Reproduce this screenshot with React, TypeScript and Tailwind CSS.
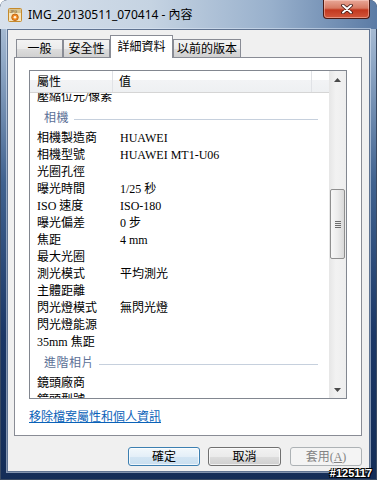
import React from 'react';

type Row = { k: string; v?: string };

const before: Row[] = [{ k: '壓縮位元/像素' }];

const camera: Row[] = [
  { k: '相機製造商', v: 'HUAWEI' },
  { k: '相機型號', v: 'HUAWEI MT1-U06' },
  { k: '光圈孔徑' },
  { k: '曝光時間', v: '1/25 秒' },
  { k: 'ISO 速度', v: 'ISO-180' },
  { k: '曝光偏差', v: '0 步' },
  { k: '焦距', v: '4 mm' },
  { k: '最大光圈' },
  { k: '測光模式', v: '平均測光' },
  { k: '主體距離' },
  { k: '閃光燈模式', v: '無閃光燈' },
  { k: '閃光燈能源' },
  { k: '35mm 焦距' },
];

const advanced: Row[] = [{ k: '鏡頭廠商' }, { k: '鏡頭型號' }];

const ming = "font-['Liberation_Serif','Noto_Sans_CJK_TC',serif]";
const cjk = "font-['Noto_Sans_CJK_TC',sans-serif]";

const PropRow = ({ row }: { row: Row }) => (
  <div className="h-[17px] flex items-center text-[12px] leading-[17px] text-black whitespace-nowrap">
    <div className="w-[90px] pl-[7px]">{row.k}</div>
    <div>{row.v}</div>
  </div>
);

const Group = ({ label }: { label: string }) => (
  <div className="h-[24px] flex items-center pl-[14px] text-[12px] text-[#5b7096]">
    <span className="tracking-[0.5px]">{label}</span>
    <div className="flex-1 h-px bg-[#c6d0dd] ml-[5px] mr-[11px] mt-[2px]" />
  </div>
);

const Tab = ({ label, w, active }: { label: string; w: string; active?: boolean }) => (
  <div
    className={`${w} flex items-center justify-center text-[12px] border border-[#898c95] border-b-0 ${
      active
        ? 'h-[23px] bg-white relative z-10'
        : 'h-[19px] bg-[linear-gradient(180deg,#f3f3f3_0%,#ebebeb_50%,#dddddd_51%,#cfcfcf_100%)]'
    }`}
  >
    {label}
  </div>
);

export default function App() {
  return (
    <div
      className={`w-[377px] h-[480px] relative flex flex-col overflow-hidden rounded-t-[7px] shadow-[inset_0_0_0_1px_#3a4a62] bg-[linear-gradient(180deg,#b9c9dc_0%,#93abc8_12%,#40628f_38%,#1b3766_70%,#142d57_100%)] ${cjk}`}
    >
      {/* title bar */}
      <div className="h-[29px] shrink-0 flex items-center pl-[7px] pr-[7px] rounded-t-[7px] bg-[linear-gradient(90deg,#d8e1ec_0%,#c5d3e2_40%,#98b0cc_72%,#5b7ba5_100%)]">
        <svg width="16" height="16" viewBox="0 0 16 16" className="shrink-0">
          <rect x="1.5" y="1.5" width="13" height="13" rx="1" fill="#f7e6bd" stroke="#c58a2c" />
          <rect x="2" y="2" width="12" height="4" fill="#d8c28f" />
          <text x="3" y="5.6" fontSize="3.6" fill="#6b4b12" fontFamily="Liberation Sans">JPG</text>
          <circle cx="8" cy="10.3" r="3.3" fill="#f28b22" stroke="#b45a0e" strokeWidth="0.8" />
          <circle cx="8" cy="10.3" r="1.3" fill="#fff3dc" />
        </svg>
        <span className="ml-[5px] text-[12px] text-black font-['Noto_Sans','Noto_Sans_CJK_TC',sans-serif] leading-none">
          IMG_20130511_070414 - 內容
        </span>
        <div className="flex-1" />
        <div className="self-start w-[47px] h-[19px] rounded-b-[4px] border border-t-0 border-[#4a1a14] bg-[linear-gradient(180deg,#e8a898_0%,#d77a63_45%,#c2381f_55%,#d2573c_100%)] flex items-center justify-center shadow-[inset_0_0_0_1px_rgba(255,220,210,0.45)]">
          <svg width="12" height="10" viewBox="0 0 12 10">
            <path d="M2 1.5 L10 8.5 M10 1.5 L2 8.5" stroke="#3a1410" strokeWidth="3.6" strokeLinecap="round" />
            <path d="M2 1.5 L10 8.5 M10 1.5 L2 8.5" stroke="#ffffff" strokeWidth="2" strokeLinecap="round" />
          </svg>
        </div>
      </div>

      {/* client area */}
      <div className="mx-[7px] h-[443px] shrink-0 bg-[#f0f0f0] border border-[#5f7391] shadow-[0_0_0_1px_rgba(220,232,245,0.55)] flex flex-col">
        <div className={`flex items-end h-[23px] mt-[5px] ml-[8px] ${ming}`}>
          <Tab label="一般" w="w-[47px]" />
          <Tab label="安全性" w="w-[47px]" />
          <Tab label="詳細資料" w="w-[63px]" active />
          <Tab label="以前的版本" w="w-[68px]" />
        </div>

        <div className={`ml-[6px] -mt-px w-[348px] h-[379px] bg-white border border-[#898c95] flex flex-col pl-[14px] pt-[12px] ${ming}`}>
          {/* list view */}
          <div className="w-[318px] h-[329px] border border-[#828790] flex">
            <div className="flex-1 flex flex-col overflow-hidden">
              <div className="h-[22px] shrink-0 flex text-[12px] border-b border-[#d5d5d5] bg-[linear-gradient(180deg,#ffffff_0%,#ffffff_42%,#f2f3f5_43%,#eef0f2_100%)]">
                <div className="w-[83px] pl-[7px] flex items-center border-r border-[#e0e2e6]">屬性</div>
                <div className="w-[199px] pl-[6px] flex items-center border-r border-[#e0e2e6]">值</div>
                <div className="flex-1" />
              </div>
              <div className="flex-1 overflow-hidden">
                <div className="-mt-[4px]">
                  {before.map((r) => (
                    <PropRow key={r.k} row={r} />
                  ))}
                  <Group label="相機" />
                  {camera.map((r) => (
                    <PropRow key={r.k} row={r} />
                  ))}
                  <Group label="進階相片" />
                  {advanced.map((r) => (
                    <PropRow key={r.k} row={r} />
                  ))}
                </div>
              </div>
            </div>

            {/* scrollbar */}
            <div className="w-[17px] shrink-0 flex flex-col bg-[linear-gradient(90deg,#e6e6e6_0%,#f2f2f2_40%,#eeeeee_100%)]">
              <div className="h-[17px] flex items-center justify-center">
                <svg width="7" height="4" viewBox="0 0 7 4">
                  <path d="M0 4 L3.5 0 L7 4 Z" fill="#4a4a4a" />
                </svg>
              </div>
              <div className="h-[101px]" />
              <div className="h-[70px] mx-[1px] rounded-[2px] border border-[#8f8f8f] bg-[linear-gradient(90deg,#f7f7f7_0%,#ececec_50%,#d9d9d9_100%)] flex flex-col items-center justify-center gap-[1px]">
                <div className="w-[6px] h-px bg-[#6d6d6d]" />
                <div className="w-[6px] h-px bg-[#6d6d6d]" />
                <div className="w-[6px] h-px bg-[#6d6d6d]" />
                <div className="w-[6px] h-px bg-[#6d6d6d]" />
              </div>
              <div className="flex-1" />
              <div className="h-[17px] flex items-center justify-center">
                <svg width="7" height="4" viewBox="0 0 7 4">
                  <path d="M0 0 L7 0 L3.5 4 Z" fill="#4a4a4a" />
                </svg>
              </div>
            </div>
          </div>

          <div className={`mt-[9px] w-fit text-[12px] leading-[15px] text-[#0a62b8] underline ${cjk}`}>
            移除檔案屬性和個人資訊
          </div>
        </div>

        {/* buttons */}
        <div className={`flex mt-[11px] pl-[120px] text-[12px] ${ming}`}>
          <div className="w-[72px] h-[19px] rounded-[3px] border border-[#3c7fb1] bg-[linear-gradient(180deg,#f2f8fc_0%,#e4eff8_50%,#d3e5f3_51%,#c9dff0_100%)] shadow-[inset_0_0_0_1px_rgba(255,255,255,0.7)] flex items-center justify-center">
            確定
          </div>
          <div className="ml-[8px] w-[73px] h-[19px] rounded-[3px] border border-[#707070] bg-[linear-gradient(180deg,#f2f2f2_0%,#ebebeb_50%,#dddddd_51%,#cfcfcf_100%)] shadow-[inset_0_0_0_1px_rgba(255,255,255,0.7)] flex items-center justify-center">
            取消
          </div>
          <div className="ml-[9px] w-[72px] h-[19px] rounded-[3px] border border-[#adb2b5] bg-[#f4f4f4] text-[#838383] flex items-center justify-center">
            套用(<span className="underline">A</span>)
          </div>
        </div>
      </div>

      <div className="absolute right-[5px] bottom-[1px] text-[11px] leading-[11px] font-bold text-white font-['Liberation_Sans',sans-serif] [text-shadow:1px_1px_0_#000,-1px_-1px_0_#000,1px_-1px_0_#000,-1px_1px_0_#000]">
        #125117
      </div>
    </div>
  );
}
